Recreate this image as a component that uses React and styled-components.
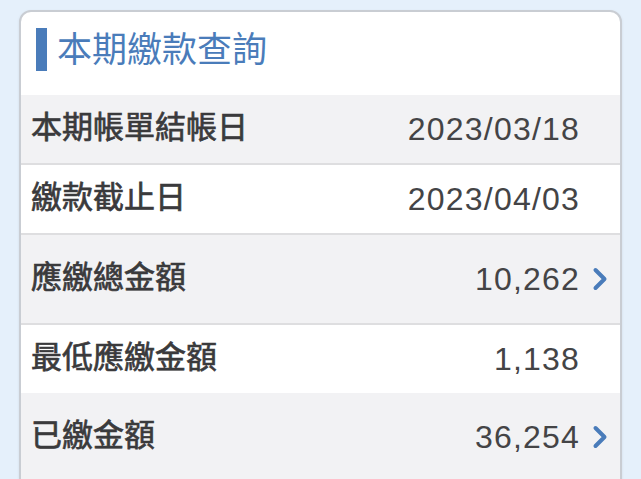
import styled, { createGlobalStyle } from 'styled-components';

const GlobalStyle = createGlobalStyle`
  html, body {
    margin: 0;
    padding: 0;
    background: #e5f0fb;
    overflow: hidden;
  }
  body {
    font-family: "Noto Sans CJK TC", "Noto Sans", sans-serif;
  }
`;

const rows = [
  { label: '本期帳單結帳日', value: '2023/03/18', tone: 'grey', height: 68 },
  { label: '繳款截止日', value: '2023/04/03', tone: 'white', height: 68, line: true },
  { label: '應繳總金額', value: '10,262', tone: 'grey', height: 88, link: true, line: true },
  { label: '最低應繳金額', value: '1,138', tone: 'white', height: 68, line: true },
  { label: '已繳金額', value: '36,254', tone: 'grey', height: 88, link: true },
];

const Chevron = () => (
  <svg width="16" height="24" viewBox="0 0 16 24">
    <polyline points="3.5,3 12.5,12 3.5,21" fill="none" stroke="#4a7cba" strokeWidth="4" strokeLinecap="round" strokeLinejoin="round" />
  </svg>
);

const App = () => {
  return (
    <Page>
      <GlobalStyle />
      <Card>
        <Header>
          <Accent />
          <Title>本期繳款查詢</Title>
        </Header>
        {rows.map(row => (
          <Row key={row.label} tone={row.tone} h={row.height} line={row.line ? 1 : 0}>
            <Label>{row.label}</Label>
            <ValueWrap>
              <Value>{row.value}</Value>
              <Arrow>{row.link && <Chevron />}</Arrow>
            </ValueWrap>
          </Row>
        ))}
      </Card>
    </Page>
  );
};

export default App;

const Page = styled.div`
  height: 479px;
  padding: 10px 0 0 19px;
  box-sizing: border-box;
`;

const Card = styled.div`
  width: 603px;
  height: 500px;
  box-sizing: border-box;
  background: #ffffff;
  border: 2px solid #c9cdd3;
  border-radius: 12px;
  overflow: hidden;
  box-shadow: 0 1px 3px rgba(0, 0, 0, 0.08);
`;

const Header = styled.div`
  display: flex;
  align-items: center;
  height: 83px;
  box-sizing: border-box;
  padding: 0 0 8px 15px;
  gap: 10px;
`;

const Accent = styled.div`
  width: 11px;
  height: 43px;
  background: #4a7cba;
`;

const Title = styled.h1`
  margin: 0;
  font-size: 35px;
  font-weight: 400;
  color: #4a7cba;
  line-height: 1;
  padding-bottom: 6px;
`;

const Row = styled.div`
  display: flex;
  align-items: center;
  justify-content: space-between;
  height: ${props => props.h}px;
  padding: 0 12px 0 10px;
  background: ${props => (props.tone === 'grey' ? '#f2f2f4' : '#ffffff')};
  border-top: ${props => (props.line ? '2px solid #dedee0' : 'none')};
`;

const Label = styled.span`
  font-size: 31px;
  font-weight: 400;
  -webkit-text-stroke: 0.7px #3a3a3c;
  color: #3a3a3c;
  line-height: 1;
  padding-bottom: 9px;
`;

const ValueWrap = styled.div`
  display: flex;
  align-items: center;
  gap: 12px;
`;

const Value = styled.span`
  font-family: "Liberation Sans", Arial, sans-serif;
  font-size: 32px;
  letter-spacing: 1.2px;
  color: #444446;
  line-height: 1;
`;

const Arrow = styled.span`
  display: flex;
  width: 16px;
  justify-content: center;
`;
